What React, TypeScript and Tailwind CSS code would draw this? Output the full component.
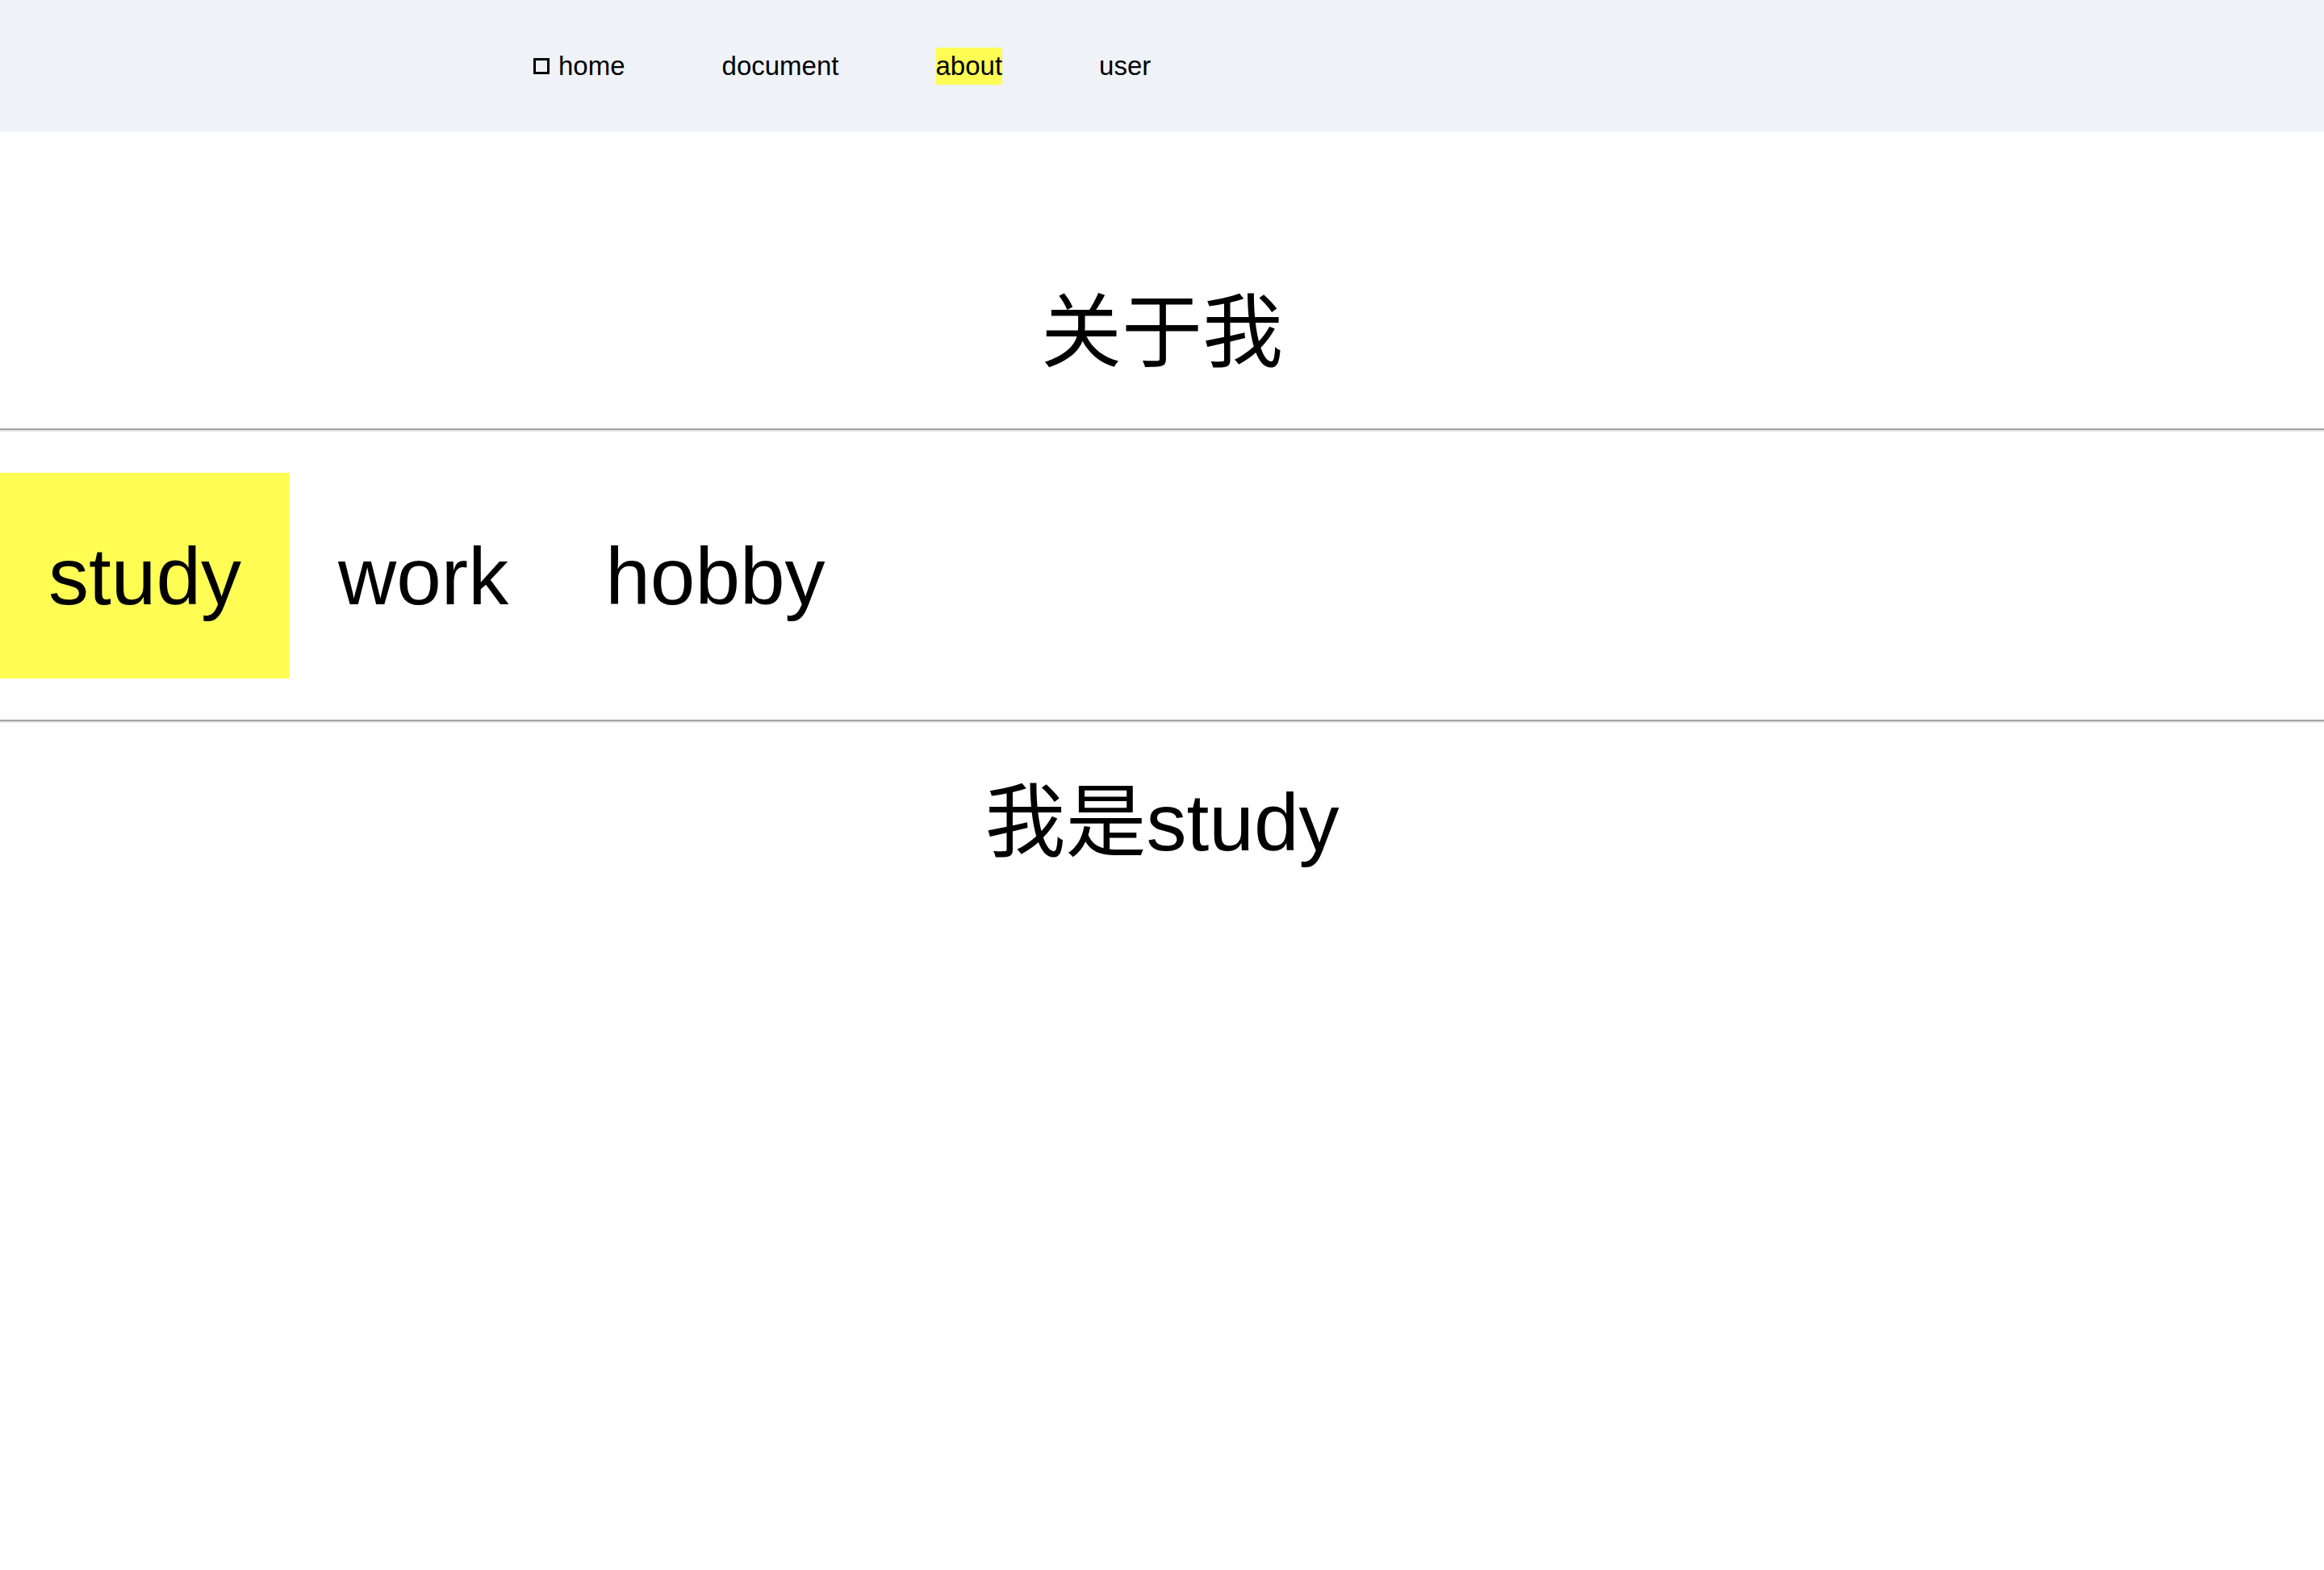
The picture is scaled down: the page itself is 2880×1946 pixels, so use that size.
const navItems = ["home", "document", "about", "user"];
const tabs = ["study", "work", "hobby"];

const App = () => {
  const active = "study";
  return (
    <div className="min-h-[1946px] bg-white text-black font-['Liberation_Sans','Noto_Sans_CJK_SC',sans-serif]">
      <header className="h-[163px] bg-[#eff2f7] flex items-center pl-[661px] gap-[120px] text-[33px]">
        {navItems.map((item) => (
          <div key={item} className="flex items-center gap-[11px]">
            {item === "home" && (
              <span className="w-[20px] h-[20px] border-[3px] border-black inline-block" />
            )}
            <span
              className={
                item === "about"
                  ? "inline-block leading-[46px] bg-[#fffd54]"
                  : "inline-block leading-[46px]"
              }
            >
              {item}
            </span>
          </div>
        ))}
      </header>

      <h1 className="mt-[199px] h-[100px] text-center text-[100px] leading-[100px] font-normal">
        关于我
      </h1>

      <div className="mt-[69px] h-[4px] border-t-2 border-b-2 border-t-[#a3a3a3] border-b-[#e6e6e6]" />

      <div className="py-[51px] flex">
        {tabs.map((tab) => (
          <div
            key={tab}
            className={
              tab === active
                ? "h-[255px] px-[60px] flex items-center text-[100px] bg-[#fffd54]"
                : "h-[255px] px-[60px] flex items-center text-[100px]"
            }
          >
            {tab}
          </div>
        ))}
      </div>

      <div className="h-[4px] border-t-2 border-b-2 border-t-[#a3a3a3] border-b-[#e6e6e6]" />

      <div className="mt-[73px] h-[100px] text-center text-[100px] leading-[100px]">
        我是{active}
      </div>
    </div>
  );
};

export default App;
